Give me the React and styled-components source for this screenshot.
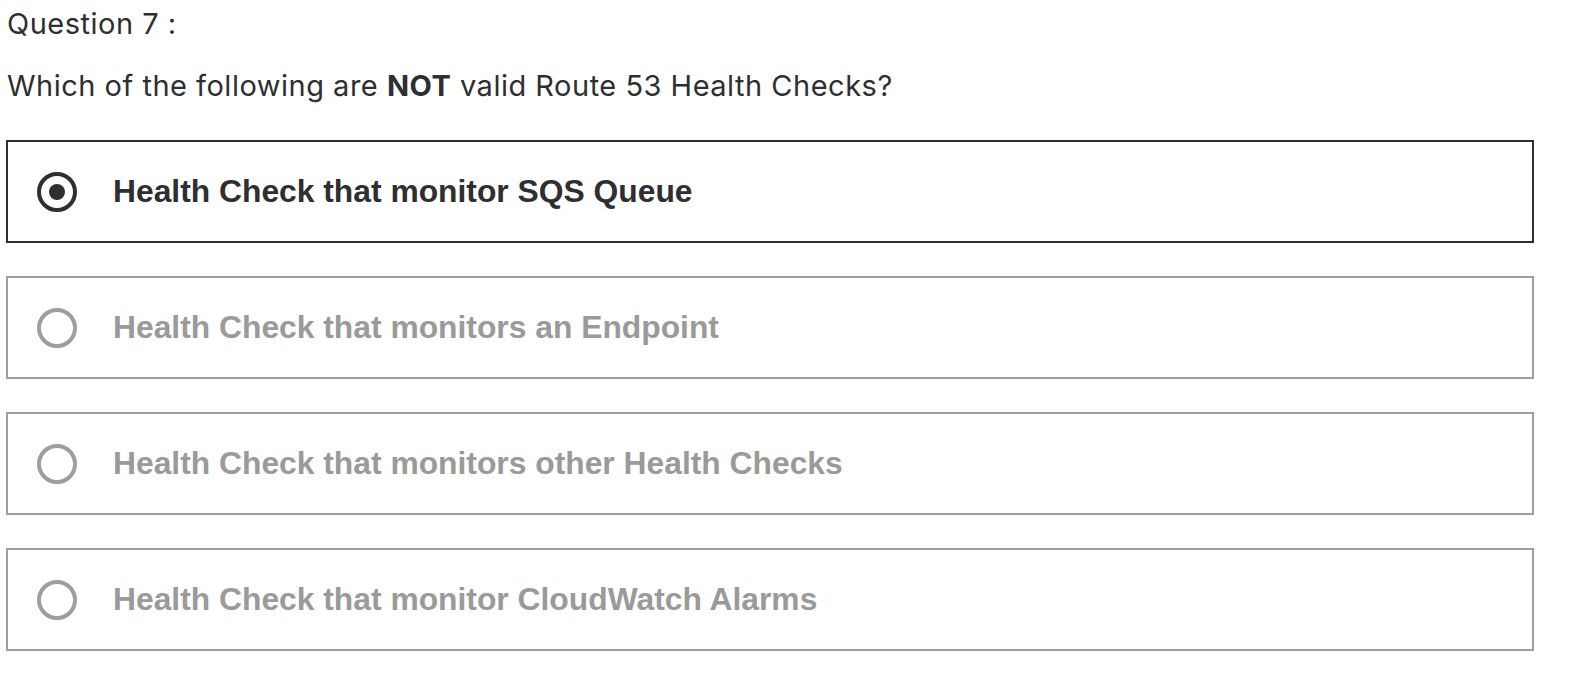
import styled, { createGlobalStyle } from 'styled-components'

const GlobalStyle = createGlobalStyle`
	body {
		margin: 0;
		background: #ffffff;
		font-family: 'Liberation Sans', Arial, sans-serif;
		color: #2d2f31;
	}
`

const Page = styled.div`
	padding: 4px 48px 0 6px;
`

const Title = styled.div`
	font-family: Inter, 'Liberation Sans', sans-serif;
	font-size: 29px;
	letter-spacing: 0.5px;
	line-height: 40px;
	padding-left: 1px;
`

const Prompt = styled.p`
	margin: 22px 0 34px;
	font-family: Inter, 'Liberation Sans', sans-serif;
	font-size: 29px;
	letter-spacing: 0.5px;
	line-height: 40px;
	padding-left: 1px;

	strong {
		font-weight: 700;
	}
`

const Options = styled.div`
	display: flex;
	flex-direction: column;
	gap: 33px;
`

const Option = styled.label`
	display: flex;
	align-items: center;
	gap: 36px;
	height: 103px;
	box-sizing: border-box;
	padding-left: 29px;
	border: 2px solid ${(props) => (props.$selected ? '#2d2f31' : '#9e9e9e')};
	cursor: pointer;
`

const Radio = styled.span`
	flex: none;
	width: 40px;
	height: 40px;
	box-sizing: border-box;
	border-radius: 50%;
	border: 4px solid ${(props) => (props.$selected ? '#2d2f31' : '#9e9e9e')};
	display: flex;
	align-items: center;
	justify-content: center;

	&::after {
		content: '';
		display: ${(props) => (props.$selected ? 'block' : 'none')};
		width: 16px;
		height: 16px;
		border-radius: 50%;
		background: #2d2f31;
	}
`

const OptionText = styled.span`
	font-size: 31.8px;
	font-weight: 700;
	color: ${(props) => (props.$selected ? '#2d2f31' : '#9a9a9a')};
`

const answers = [
	'Health Check that monitor SQS Queue',
	'Health Check that monitors an Endpoint',
	'Health Check that monitors other Health Checks',
	'Health Check that monitor CloudWatch Alarms',
]

export default function App() {
	const selected = 0

	return (
		<>
			<GlobalStyle />
			<Page>
				<Title>Question 7 :</Title>
				<Prompt>
					Which of the following are <strong>NOT</strong> valid Route 53 Health Checks?
				</Prompt>
				<Options>
					{answers.map((text, i) => (
						<Option key={text} $selected={i === selected}>
							<Radio $selected={i === selected} />
							<OptionText $selected={i === selected}>{text}</OptionText>
						</Option>
					))}
				</Options>
			</Page>
		</>
	)
}
